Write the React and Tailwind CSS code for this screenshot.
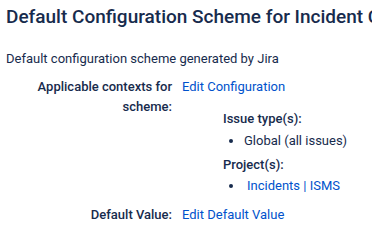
import React from 'react';

const FieldConfigScheme = () => {
  return (
    <div className="w-[372px] h-[229px] overflow-hidden bg-white text-[#172B4D] font-['Roboto',sans-serif] text-[13px] leading-[20px]">
      {/* Header */}
      <h2 className="pl-[6px] pt-[5px] text-[19px] leading-[24px] font-medium whitespace-nowrap">
        Default Configuration Scheme for Incident Configuration
      </h2>
      <p className="pl-[6px] mt-[20px]">Default configuration scheme generated by Jira</p>

      {/* Details */}
      <div className="mt-[8px] grid grid-cols-[166px_1fr] gap-x-[10px] pl-[6px]">
        <div className="text-right font-medium">Applicable contexts for scheme:</div>
        <div>
          <a href="#" className="text-[#0052CC]">Edit Configuration</a>
          <div className="ml-[41px] mt-[12px]">
            <div className="font-medium">Issue type(s):</div>
            <ul className="mt-[2px] list-disc pl-[21px]">
              <li>Global (all issues)</li>
            </ul>
            <div className="mt-[4px] font-medium">Project(s):</div>
            <ul className="mt-[1px] list-disc pl-[21px]">
              <li>
                <a href="#" className="ml-[3px] text-[#0052CC]">Incidents | ISMS</a>
              </li>
            </ul>
          </div>
        </div>
        <div className="mt-[9px] text-right font-medium">Default Value:</div>
        <div className="mt-[9px]">
          <a href="#" className="text-[#0052CC]">Edit Default Value</a>
        </div>
      </div>
    </div>
  );
};

export default function App() {
  return <FieldConfigScheme />;
}
